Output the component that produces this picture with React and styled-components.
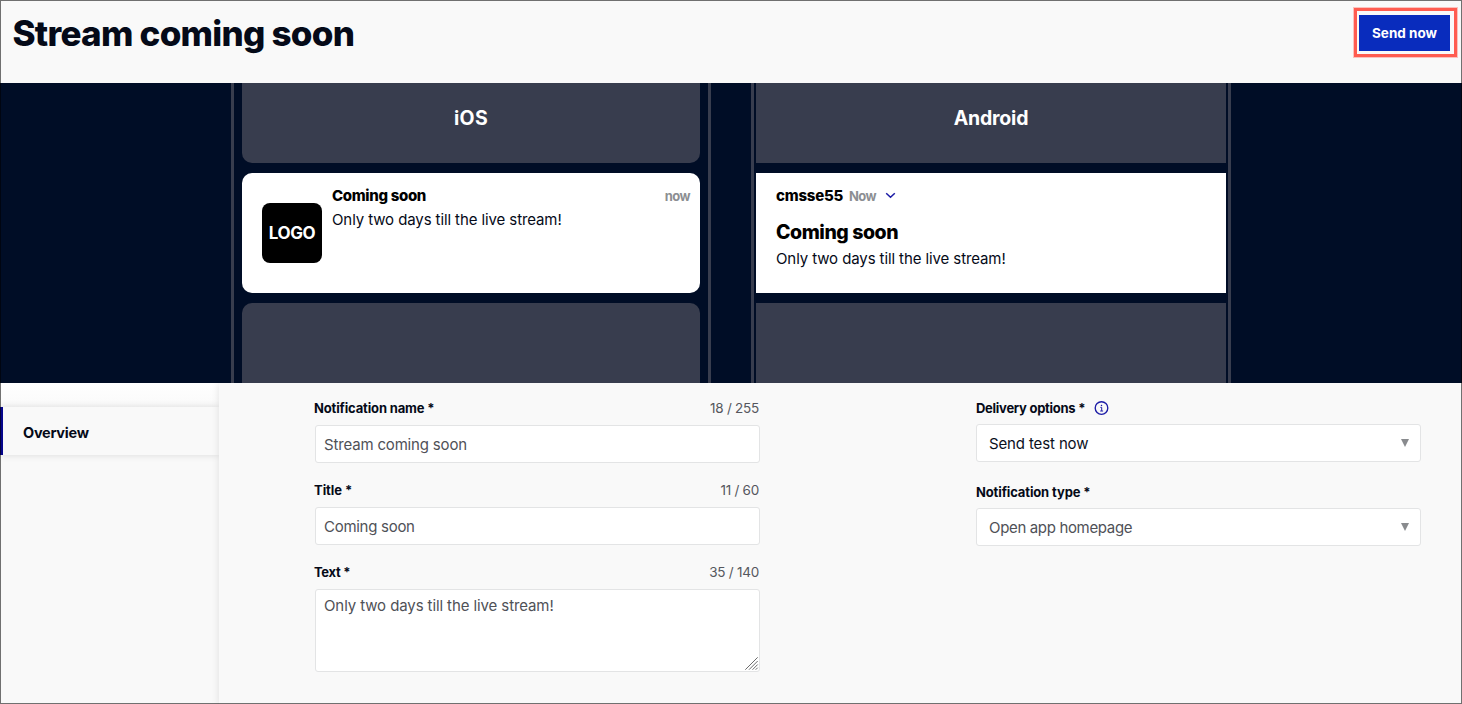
import React from "react";
import styled, { createGlobalStyle } from "styled-components";

const GlobalStyle = createGlobalStyle`
  *, *::before, *::after { box-sizing: border-box; }
  body { margin: 0; background: #f9f9f9; color: #050a18; font-family: "Inter", "Liberation Sans", sans-serif; }
`;

const Page = styled.div`
  position: relative;
  display: flex;
  flex-direction: column;
  width: 1462px;
  height: 704px;
  overflow: hidden;
  background: #f9f9f9;
  &::after {
    content: "";
    position: absolute;
    inset: 0;
    border: 1px solid rgba(0, 0, 0, 0.55);
    pointer-events: none;
  }
`;

const Header = styled.header`
  display: flex;
  justify-content: space-between;
  align-items: flex-start;
  height: 83px;
  flex: none;
  padding: 8px 5px 0 12.5px;
`;

const PageTitle = styled.h1`
  margin: 4px 0 0;
  font-size: 35px;
  line-height: 42px;
  font-weight: 800;
  letter-spacing: -0.74px;
`;

const Highlight = styled.div`
  padding: 4px 4px 3px 2px;
  border: 3px solid #ff5c50;
  box-shadow: 0 0 0 1px rgba(255, 92, 80, 0.35);
`;

const SendButton = styled.button`
  display: block;
  width: 91px;
  height: 36px;
  padding: 0;
  border: 0;
  background: #092cbd;
  color: #fff;
  font: 700 13.5px/36px "Inter", sans-serif;
  letter-spacing: 0;
`;

const Preview = styled.section`
  display: flex;
  gap: 40px;
  flex: none;
  height: 300px;
  padding-left: 231px;
  background: #000d26;
`;

const Phone = styled.div`
  display: flex;
  flex-direction: column;
  gap: 10px;
  width: 480px;
  padding: 0 ${(p) => p.$gutter}px;
  border: solid #383d4e;
  border-width: 0 3px;
`;

const Tile = styled.div`
  height: 80px;
  flex: none;
  background: #383d4e;
  border-radius: ${(p) => p.$radius || 0};
  color: #fff;
  font-size: 19.5px;
  line-height: 71px;
  font-weight: 700;
  letter-spacing: ${(p) => p.$tracking || "0"};
  text-align: center;
`;

const IosCard = styled.div`
  display: flex;
  gap: 10px;
  height: 120px;
  padding: 11px 10px 0 20px;
  background: #fff;
  border-radius: 10px;
`;

const AppLogo = styled.div`
  width: 60px;
  height: 60px;
  margin-top: 19px;
  border-radius: 8px;
  background: #000;
  color: #fff;
  font-size: 17px;
  line-height: 61px;
  font-weight: 700;
  letter-spacing: -0.45px;
  text-align: center;
`;

const IosText = styled.div`
  flex: 1;
`;

const CardTitle = styled.div`
  color: #000;
  font-size: ${(p) => (p.$large ? "19.5px" : "15px")};
  line-height: ${(p) => (p.$large ? "30px" : "24px")};
  font-weight: 800;
  letter-spacing: ${(p) => (p.$large ? "-0.44px" : "-0.33px")};
`;

const CardBody = styled.div`
  font-size: 15px;
  line-height: 24px;
  letter-spacing: -0.1px;
`;

const When = styled.span`
  color: #8c8e92;
  font-size: 13px;
  line-height: 24px;
  font-weight: 700;
  letter-spacing: -0.6px;
`;

const AndroidCard = styled.div`
  height: 120px;
  padding: 11px 20px 0;
  background: #fff;
`;

const AndroidHead = styled.div`
  display: flex;
  align-items: center;
  height: 24px;
  margin-bottom: 9px;
`;

const AppName = styled.span`
  margin-right: 6px;
  color: #000;
  font-size: 15px;
  line-height: 24px;
  font-weight: 800;
  letter-spacing: -0.22px;
`;

const Chevron = styled.svg`
  margin: -1px 0 1px 9px;
`;

const Workspace = styled.div`
  display: flex;
  flex: 1;
`;

const Sidebar = styled.nav`
  width: 219px;
  padding-top: 24px;
  background: linear-gradient(#fff, #fafafa 24px, #f9f9f9 25px);
`;

const NavItem = styled.a`
  display: block;
  height: 48px;
  padding-left: 20px;
  border-left: 3px solid #06068c;
  background: #f9f9f9;
  box-shadow: 0 0 7px rgba(0, 0, 0, 0.13);
  font-size: 14.5px;
  line-height: 51px;
  font-weight: 700;
  letter-spacing: -0.25px;
  clip-path: inset(-8px 0 -8px 0);
`;

const Main = styled.main`
  display: flex;
  gap: 216px;
  flex: 1;
  padding: 13px 0 0 95px;
  background: #f9f9f9;
  box-shadow: -1px 0 7px rgba(0, 0, 0, 0.09);
  clip-path: inset(0 0 0 -8px);
`;

const Column = styled.div`
  width: ${(p) => p.$width}px;
`;

const Field = styled.div`
  height: ${(p) => p.$height}px;
`;

const LabelRow = styled.div`
  display: flex;
  justify-content: space-between;
  align-items: flex-start;
  height: ${(p) => p.$height}px;
  padding-right: 1px;
`;

const Label = styled.label`
  display: flex;
  align-items: center;
  gap: 9px;
  font-size: 13px;
  line-height: 24px;
  font-weight: 700;
  letter-spacing: ${(p) => p.$tracking || "-0.15px"};
`;

const Counter = styled.span`
  color: #55575d;
  font-size: 13.5px;
  line-height: 24px;
  letter-spacing: -0.25px;
`;

const TextInput = styled.input`
  display: block;
  width: 445px;
  height: 38px;
  margin-left: 1px;
  padding: 0 8px;
  border: 1px solid #e3e4e5;
  border-radius: 3px;
  outline: 0;
  background: #fff;
  color: #4f5157;
  font: 400 15px "Inter", sans-serif;
  letter-spacing: ${(p) => p.$tracking};
`;

const AreaWrap = styled.div`
  position: relative;
  width: 445px;
  height: 83px;
  margin-left: 1px;
`;

const TextArea = styled.textarea`
  display: block;
  width: 100%;
  height: 100%;
  padding: 5px 8px 4px;
  border: 1px solid #e3e4e5;
  border-radius: 3px;
  outline: 0;
  resize: none;
  background: #fff;
  color: #4f5157;
  font: 400 15px/22px "Inter", sans-serif;
  letter-spacing: -0.1px;
`;

const Grip = styled.svg`
  position: absolute;
  right: 1px;
  bottom: 1px;
`;

const SelectBox = styled.div`
  display: flex;
  justify-content: space-between;
  align-items: center;
  width: 445px;
  height: 38px;
  padding: 0 11px 0 12px;
  border: 1px solid #e3e4e5;
  border-radius: 3px;
  background: #fff;
  color: ${(p) => (p.$muted ? "#4f5157" : "#0b101d")};
  font-size: 15px;
  letter-spacing: ${(p) => (p.$muted ? "-0.34px" : "-0.13px")};
`;

const InfoIcon = () => (
  <svg width="15" height="15" viewBox="0 0 15 15" fill="none" stroke="#1c1ca6" strokeWidth="1.35">
    <circle cx="7.5" cy="7" r="6.3" />
    <path d="M6.4 6.4h1.3v3.5M6.2 10h2.9" strokeWidth="1" />
    <path d="M7.5 3.8v1.3" strokeWidth="1.3" />
  </svg>
);

const Arrow = () => (
  <svg width="8" height="8" viewBox="0 0 8 8" fill="#898b8e">
    <path d="M0 0h8L4 8z" />
  </svg>
);

function SelectField({ label, value, muted, info }) {
  return (
    <Field $height={84}>
      <LabelRow $height={28}>
        <Label $tracking={info ? "-0.27px" : "-0.13px"}>
          {label}
          {info && <InfoIcon />}
        </Label>
      </LabelRow>
      <SelectBox $muted={muted}>
        {value}
        <Arrow />
      </SelectBox>
    </Field>
  );
}

function CountedField({ label, count, tracking, children }) {
  return (
    <Field $height={82}>
      <LabelRow $height={29}>
        <Label $tracking={tracking}>{label}</Label>
        <Counter>{count}</Counter>
      </LabelRow>
      {children}
    </Field>
  );
}

export default function App() {
  return (
    <>
      <GlobalStyle />
      <Page>
        <Header>
          <PageTitle>Stream coming soon</PageTitle>
          <Highlight>
            <SendButton>Send now</SendButton>
          </Highlight>
        </Header>
        <Preview>
          <Phone $gutter={8}>
            <Tile $radius="0 0 10px 10px" $tracking="0.3px">iOS</Tile>
            <IosCard>
              <AppLogo>LOGO</AppLogo>
              <IosText>
                <CardTitle>Coming soon</CardTitle>
                <CardBody>Only two days till the live stream!</CardBody>
              </IosText>
              <When>now</When>
            </IosCard>
            <Tile $radius="10px 10px 0 0" />
          </Phone>
          <Phone $gutter={2}>
            <Tile $tracking="-0.2px">Android</Tile>
            <AndroidCard>
              <AndroidHead>
                <AppName>cmsse55</AppName>
                <When>Now</When>
                <Chevron width="11" height="7" viewBox="0 0 11 7" fill="none" stroke="#1c1ca6" strokeWidth="1.5">
                  <path d="M1.2 1.2l4.3 4.1 4.3-4.1" />
                </Chevron>
              </AndroidHead>
              <CardTitle $large>Coming soon</CardTitle>
              <CardBody>Only two days till the live stream!</CardBody>
            </AndroidCard>
            <Tile />
          </Phone>
        </Preview>
        <Workspace>
          <Sidebar>
            <NavItem>Overview</NavItem>
          </Sidebar>
          <Main>
            <Column $width={446}>
              <CountedField label="Notification name *" count="18 / 255" tracking="-0.15px">
                <TextInput defaultValue="Stream coming soon" $tracking="-0.17px" />
              </CountedField>
              <CountedField label="Title *" count="11 / 60" tracking="-0.05px">
                <TextInput defaultValue="Coming soon" $tracking="-0.28px" />
              </CountedField>
              <CountedField label="Text *" count="35 / 140" tracking="-0.3px">
                <AreaWrap>
                  <TextArea defaultValue="Only two days till the live stream!" />
                  <Grip width="14" height="14" viewBox="0 0 14 14" stroke="#6b6b6b" strokeWidth="1">
                    <path d="M0.3 12.7L12.7 0.3M4 12.7L12.7 4M7.5 12.7L12.7 7.5M10.7 12.7l2-2" />
                  </Grip>
                </AreaWrap>
              </CountedField>
            </Column>
            <Column $width={445}>
              <SelectField label="Delivery options *" value="Send test now" info />
              <SelectField label="Notification type *" value="Open app homepage" muted />
            </Column>
          </Main>
        </Workspace>
      </Page>
    </>
  );
}
